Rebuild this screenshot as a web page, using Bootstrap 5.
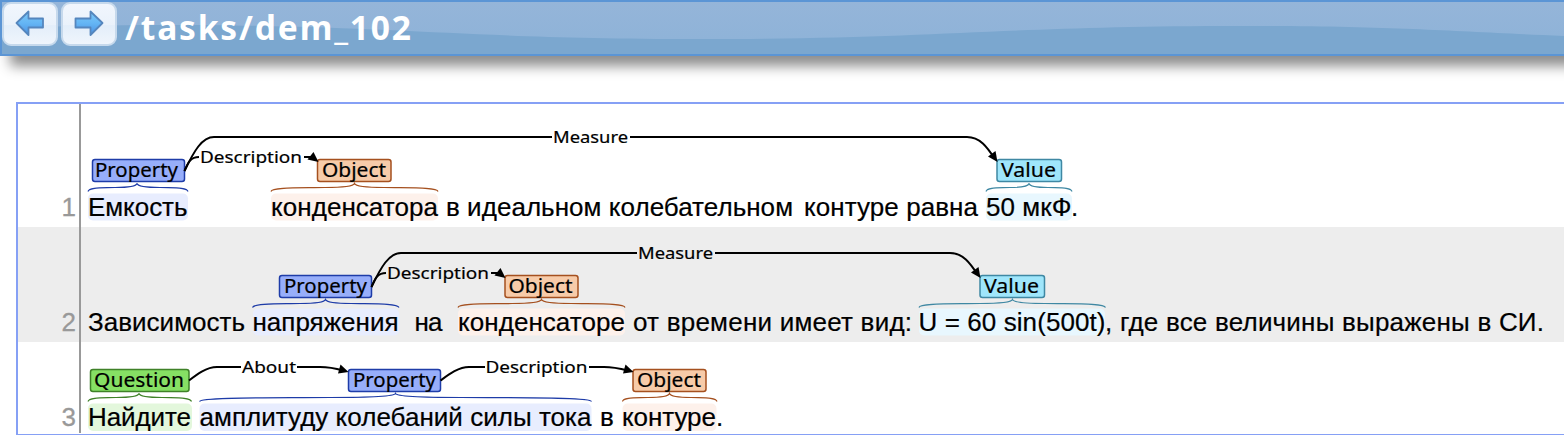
<!DOCTYPE html>
<html lang="ru">
<head>
<meta charset="utf-8">
<meta name="viewport" content="width=device-width, initial-scale=1">
<title>/tasks/dem_102</title>
<link href="https://cdn.jsdelivr.net/npm/bootstrap@5.3.0/dist/css/bootstrap.min.css" rel="stylesheet">
<style>
body{font-family:"Liberation Sans",Arial,sans-serif;background:#fff;overflow:hidden;height:442px}
.topbar{height:56px;width:1600px;border:2px solid #5b95d5;background:#7ba7cf;box-shadow:10px 10px 12px 0 rgba(0,0,0,.45)}
.wave{left:0;top:0;z-index:0}
.topbar > :not(.wave){position:relative;z-index:1}
.navbtn{width:56px;height:44px;padding:0;border:2px solid #c6d9ec;border-radius:9px;background:linear-gradient(#f1f6fd,#eaf2fb 52%,#e3eefa 54%,#eff5fc)}
.doc{font:bold 33.5px/50px "Noto Sans",sans-serif;color:#fff;white-space:nowrap;letter-spacing:1.850px}
.sheet{margin:46px 0 0 16px;border:2px solid #86a0f5;border-width:2px 0 1px 2px}
.sent-num{width:63px;border-right:2px solid #999;color:#999;font-size:26px;line-height:30px;padding:0 3px 5px 0;-webkit-text-stroke:.3px #999}
.r1{height:123px}.r2{height:115px}.r3{height:92px}
.r2{background:#ededed}
.r3 .sent-num{padding-bottom:1px;margin-bottom:1px}
.sheet svg{display:block;flex:none}
.words{font-size:26px;fill:#000;stroke:#000;stroke-width:.2}
.tags{font-family:"Noto Sans",sans-serif;font-size:19px;fill:#000;stroke:#000;stroke-width:.2}
.arc-names{font-family:"Noto Sans",sans-serif;font-size:17px;fill:#000;stroke:#000;stroke-width:.2}
.arcs{fill:none;stroke:#000;stroke-width:2}
.prop{fill:#97aefa;stroke:#1e3ca8}.obj{fill:#f7cba9;stroke:#a5501f}.val{fill:#9fe6fb;stroke:#3f88a3}.ques{fill:#86e064;stroke:#3f8128}
.boxes{stroke-width:1.5}
.hl-prop{fill:#e8edfe}.hl-obj{fill:#fdf1eb}.hl-val{fill:#e8f7fe}.hl-ques{fill:#e3f7dc}
.braces{fill:none;stroke-width:1.2}
.br-prop{stroke:#1e3ca8}.br-obj{stroke:#a5501f}.br-val{stroke:#3f88a3}.br-ques{stroke:#3f8128}
</style>
</head>
<body>
<header class="topbar position-relative d-flex align-items-start">
  <svg class="wave position-absolute" width="1562" height="52" viewBox="2 2 1562 52">
    <defs><linearGradient id="sky" x1="0" y1="0" x2="0" y2="1"><stop offset="0" stop-color="#95b5d9"/><stop offset="1" stop-color="#8fb3d8"/></linearGradient></defs>
    <path fill="url(#sky)" d="M0 0V28C60 26 110 25 160 25C400 25 460 39 700 39C940 39 1000 26 1240 26C1400 26 1460 32 1566 36V0Z"/>
  </svg>
  <button class="btn navbtn d-flex align-items-center justify-content-center" aria-label="Previous">
    <svg width="30" height="28" viewBox="0 0 30 28"><defs><linearGradient id="blu" x1="0" y1="0" x2="0" y2="1"><stop offset="0" stop-color="#7cc8f8"/><stop offset=".5" stop-color="#64b5f4"/><stop offset="1" stop-color="#4a90e2"/></linearGradient></defs><path d="M1.500 13L13.500 1.500V8.500H28V17.500H13.500V25Z" fill="url(#blu)" stroke="#5586bd" stroke-width="1.800" stroke-linejoin="round"/></svg>
  </button>
  <button class="btn navbtn d-flex align-items-center justify-content-center" style="margin-left:3px" aria-label="Next">
    <svg width="30" height="28" viewBox="0 0 30 28"><path d="M28.500 13L16.500 1.500V8.500H1.500V17.500H16.500V25Z" fill="url(#blu)" stroke="#5586bd" stroke-width="1.800" stroke-linejoin="round"/></svg>
  </button>
  <div class="doc ms-2">/tasks/dem_102</div>
</header>

<main class="sheet">
  <section class="r1 d-flex">
    <div class="sent-num d-flex align-items-end justify-content-end">1</div>
    <svg width="1483" height="123" viewBox="81 104 1483 123">
      <rect class="hl-prop" x="88" y="193.500" width="100" height="27" rx="5"/>
      <rect class="hl-obj" x="271" y="193.500" width="167" height="27" rx="5"/>
      <rect class="hl-val" x="986" y="193.500" width="86" height="27" rx="5"/>
      <g class="braces">
        <path class="br-prop" d="M88 191.500C89 187 103 188 115 187.500Q136 187.500 137 183.500Q138 187.500 160 187.500C173 188 187 187 188 191.500"/>
        <path class="br-obj" d="M271 191.500C272 187 300 188 325 187.500Q353 187.500 354.500 183.500Q356 187.500 384 187.500C409 188 437 187 438 191.500"/>
        <path class="br-val" d="M986 191.500C987 187 999 188 1010 187.500Q1028 187.500 1029 183.500Q1030 187.500 1048 187.500C1059 188 1071 187 1072 191.500"/>
      </g>
      <g class="boxes">
        <rect class="prop" x="92.500" y="159.500" width="92" height="22" rx="2.500"/>
        <rect class="obj" x="317.500" y="159.500" width="73.500" height="22" rx="2.500"/>
        <rect class="val" x="997" y="159.500" width="64.500" height="22" rx="2.500"/>
      </g>
      <g class="arcs">
        <path d="M184.500 171C194 151 202 137 214 137H552M630 137H967C980 137 987 147 995 159"/>
        <path d="M184.500 171C188 162 191 157 199 157M304 157H312"/>
      </g>
      <path d="M318.500 162L307.500 159.500L313.500 152Z"/>
      <path d="M997.500 162L988 156.500L995.500 151Z"/>
      <g class="tags">
        <text x="95" y="177" textLength="83" lengthAdjust="spacingAndGlyphs">Property</text>
        <text x="322" y="177" textLength="64" lengthAdjust="spacingAndGlyphs">Object</text>
        <text x="1001" y="177" textLength="55" lengthAdjust="spacingAndGlyphs">Value</text>
      </g>
      <g class="arc-names">
        <text x="200" y="163" textLength="102" lengthAdjust="spacingAndGlyphs">Description</text>
        <text x="553" y="143" textLength="75" lengthAdjust="spacingAndGlyphs">Measure</text>
      </g>
      <g class="words">
        <text x="88" y="216" textLength="99.500">Емкость</text>
        <text x="271" y="216" textLength="167">конденсатора</text>
        <text x="446" y="216" textLength="347">в идеальном колебательном</text>
        <text x="804" y="216" textLength="174">контуре равна</text>
        <text x="986" y="216" textLength="85.500">50 мкФ</text>
        <text x="1071" y="216">.</text>
      </g>
    </svg>
  </section>

  <section class="r2 d-flex">
    <div class="sent-num d-flex align-items-end justify-content-end">2</div>
    <svg width="1483" height="115" viewBox="81 227 1483 115">
      <rect class="hl-prop" x="253" y="308.500" width="146" height="27" rx="5"/>
      <rect class="hl-obj" x="458" y="308.500" width="167" height="27" rx="5"/>
      <rect class="hl-val" x="919" y="308.500" width="186" height="27" rx="5"/>
      <g class="braces">
        <path class="br-prop" d="M252.500 307.500C254 303 280 304 300 303.500Q324 303.500 325.500 299.500Q327 303.500 351 303.500C371 304 397 303 399 307.500"/>
        <path class="br-obj" d="M458 307.500C459 303 487 304 512 303.500Q540 303.500 541.500 299.500Q543 303.500 571 303.500C596 304 624 303 625 307.500"/>
        <path class="br-val" d="M919 307.500C920 303 950 304 980 303.500Q1011 303.500 1012.500 299.500Q1014 303.500 1045 303.500C1075 304 1104 303 1105.500 307.500"/>
      </g>
      <g class="boxes">
        <rect class="prop" x="279.500" y="275.500" width="92" height="22" rx="2.500"/>
        <rect class="obj" x="505" y="275.500" width="73" height="22" rx="2.500"/>
        <rect class="val" x="980" y="275.500" width="64.500" height="22" rx="2.500"/>
      </g>
      <g class="arcs">
        <path d="M371.500 287C381 267 389 253 401 253H637M715 253H950C963 253 970 263 978 275"/>
        <path d="M371.500 287C375 278 378 273 386 273M491 273H499"/>
      </g>
      <path d="M505.500 278L494.500 275.500L500.500 268Z"/>
      <path d="M980.500 278L971 272.500L978.500 267Z"/>
      <g class="tags">
        <text x="284" y="293" textLength="83" lengthAdjust="spacingAndGlyphs">Property</text>
        <text x="508.500" y="293" textLength="64" lengthAdjust="spacingAndGlyphs">Object</text>
        <text x="984" y="293" textLength="55" lengthAdjust="spacingAndGlyphs">Value</text>
      </g>
      <g class="arc-names">
        <text x="387" y="279" textLength="102" lengthAdjust="spacingAndGlyphs">Description</text>
        <text x="638" y="259" textLength="75" lengthAdjust="spacingAndGlyphs">Measure</text>
      </g>
      <g class="words">
        <text x="88" y="331" textLength="157">Зависимость</text>
        <text x="252.500" y="331" textLength="146">напряжения</text>
        <text x="414.500" y="331" textLength="28">на</text>
        <text x="458" y="331" textLength="167">конденсаторе</text>
        <text x="633" y="331" textLength="279">от времени имеет вид:</text>
        <text x="918.500" y="331" textLength="187">U = 60 sin(500t)</text>
        <text x="1105" y="331" textLength="439">, где все величины выражены в СИ.</text>
      </g>
    </svg>
  </section>

  <section class="r3 d-flex">
    <div class="sent-num d-flex align-items-end justify-content-end">3</div>
    <svg width="1483" height="92" viewBox="81 342 1483 92">
      <rect class="hl-ques" x="88" y="403.500" width="104" height="27.500" rx="5"/>
      <rect class="hl-prop" x="199.500" y="403.500" width="392" height="27.500" rx="5"/>
      <rect class="hl-obj" x="622.500" y="403.500" width="94" height="27.500" rx="5"/>
      <g class="braces">
        <path class="br-ques" d="M88 401.500C89 397 104 398 116 397.500Q138 397.500 139 393.500Q140 397.500 162 397.500C175 398 190 397 191.500 401.500"/>
        <path class="br-prop" d="M199.500 401.500C201 397 270 398 330 397.500Q394 397.500 395.500 393.500Q397 397.500 461 397.500C521 398 590 397 591.500 401.500"/>
        <path class="br-obj" d="M622.500 401.500C623 397 637 398 648 397.500Q668 397.500 669.500 393.500Q671 397.500 691 397.500C702 398 716 397 717 401.500"/>
      </g>
      <g class="boxes">
        <rect class="ques" x="90.500" y="369.500" width="98.500" height="22" rx="2.500"/>
        <rect class="prop" x="348.500" y="369.500" width="92" height="22" rx="2.500"/>
        <rect class="obj" x="633" y="369.500" width="73" height="22" rx="2.500"/>
      </g>
      <g class="arcs">
        <path d="M189 380.500C196 375 206 367 217 367H241M297 367H320C330 367 336 368.500 343 370.500"/>
        <path d="M440.500 380.500C448 375 458 367 469 367H485M589 367H604C614 367 620 368.500 628 370.500"/>
      </g>
      <path d="M348.500 372L338 373.500L340.500 364.500Z"/>
      <path d="M633.500 372L623 373.500L625.500 364.500Z"/>
      <g class="tags">
        <text x="94" y="387" textLength="90" lengthAdjust="spacingAndGlyphs">Question</text>
        <text x="353" y="387" textLength="83" lengthAdjust="spacingAndGlyphs">Property</text>
        <text x="637" y="387" textLength="64" lengthAdjust="spacingAndGlyphs">Object</text>
      </g>
      <g class="arc-names">
        <text x="242" y="373" textLength="54" lengthAdjust="spacingAndGlyphs">About</text>
        <text x="485.500" y="373" textLength="102" lengthAdjust="spacingAndGlyphs">Description</text>
      </g>
      <g class="words">
        <text x="88" y="426" textLength="103">Найдите</text>
        <text x="199.500" y="426" textLength="392">амплитуду колебаний силы тока</text>
        <text x="600" y="426">в</text>
        <text x="622" y="426" textLength="94">контуре</text>
        <text x="716" y="426">.</text>
      </g>
    </svg>
  </section>
</main>
<script src="https://cdn.jsdelivr.net/npm/bootstrap@5.3.0/dist/js/bootstrap.bundle.min.js"></script>
</body>
</html>
